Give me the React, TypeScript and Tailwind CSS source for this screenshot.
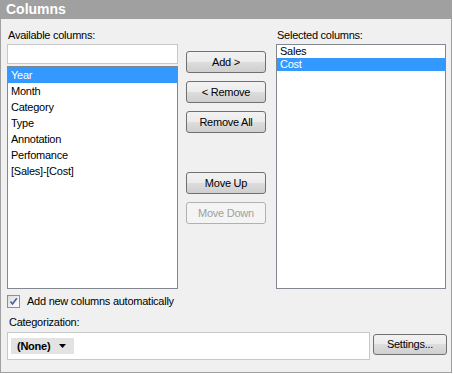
import React from "react";

const AVAILABLE = ["Year", "Month", "Category", "Type", "Annotation", "Perfomance", "[Sales]-[Cost]"];
const SELECTED = ["Sales", "Cost"];

function WinButton({ label, disabled, className = "" }: { label: string; disabled?: boolean; className?: string }) {
  return (
    <div
      className={
        "flex items-center justify-center rounded-[3px] border text-[11px] " +
        (disabled
          ? "border-[#adb2b5] bg-[#f4f4f4] text-[#a0a0a0] "
          : "border-[#707070] bg-[linear-gradient(#f2f2f2_0%,#ebebeb_50%,#dddddd_50%,#cfcfcf_100%)] text-black ") +
        className
      }
    >
      {label}
    </div>
  );
}

export default function App() {
  return (
    <div className="w-[453px] h-[374px] bg-white font-['Liberation_Sans',Arial,sans-serif] text-[11px] tracking-[-0.25px] text-black">
      <div className="w-[452px] h-[373px] flex flex-col">
        {/* header */}
        <div className="h-[19px] bg-[#a0a0a0] pl-[6px] text-[14px] font-bold leading-[19px] tracking-normal text-white">
          Columns
        </div>

        <div className="flex-1 flex flex-col border-x border-b border-[#a0a0a0] bg-[#f0f0f0] pl-[6px]">
          <div className="flex pt-[10px]">
            {/* available */}
            <div className="w-[171px] flex flex-col">
              <div className="h-[13px] leading-[13px] pl-[1px]">Available columns:</div>
              <div className="mt-[2px] h-[20px] border border-[#c8c8c8] bg-white" />
              <div className="mt-[2px] h-[223px] border border-[#828790] bg-white">
                {AVAILABLE.map((c, i) => (
                  <div
                    key={c}
                    className={"h-[16px] pl-[3px] leading-[16px] " + (i === 0 ? "bg-[#3399ff] text-white" : "")}
                  >
                    {c}
                  </div>
                ))}
              </div>
            </div>

            {/* buttons */}
            <div className="ml-[8px] w-[80px] flex flex-col pt-[22px]">
              <WinButton label="Add >" className="h-[22px]" />
              <WinButton label="< Remove" className="mt-[8px] h-[22px]" />
              <WinButton label="Remove All" className="mt-[8px] h-[22px]" />
              <WinButton label="Move Up" className="mt-[39px] h-[22px]" />
              <WinButton label="Move Down" disabled className="mt-[8px] h-[22px]" />
            </div>

            {/* selected */}
            <div className="ml-[10px] w-[170px] flex flex-col">
              <div className="h-[13px] leading-[13px] pl-[1px]">Selected columns:</div>
              <div className="mt-[2px] h-[245px] border border-[#828790] bg-white">
                {SELECTED.map((c, i) => (
                  <div
                    key={c}
                    className={"h-[13px] pl-[3px] leading-[13px] " + (i === 1 ? "bg-[#3399ff] text-white" : "")}
                  >
                    {c}
                  </div>
                ))}
              </div>
            </div>
          </div>

          {/* checkbox */}
          <div className="mt-[6px] flex h-[13px] items-center">
            <div className="relative h-[13px] w-[13px] border border-[#8e8f8f] bg-[linear-gradient(135deg,#dcdcdc,#ffffff)]">
              <svg viewBox="0 0 11 11" className="absolute inset-0 h-[11px] w-[11px]">
                <path d="M2.5 5.5 L4.5 8 L8.8 2.2" fill="none" stroke="#4a5f97" strokeWidth="1.6" />
              </svg>
            </div>
            <span className="ml-[7px] leading-[13px]">Add new columns automatically</span>
          </div>

          {/* categorization */}
          <div className="mt-[8px] h-[13px] leading-[13px] pl-[2px]">Categorization:</div>
          <div className="mt-[3px] flex items-start">
            <div className="h-[28px] w-[363px] border border-[#c8c8c8] bg-white pl-[3px] pt-[5px]">
              <div className="flex h-[16px] w-[63px] items-center bg-[#e3e3e3] pl-[6px]">
                <span className="font-bold">(None)</span>
                <svg viewBox="0 0 7 4" className="ml-[9px] h-[4px] w-[7px]">
                  <path d="M0 0 H7 L3.5 4 Z" fill="#000" />
                </svg>
              </div>
            </div>
            <WinButton label="Settings..." className="ml-[3px] mt-[2px] h-[21px] w-[74px]" />
          </div>
        </div>
      </div>
    </div>
  );
}
